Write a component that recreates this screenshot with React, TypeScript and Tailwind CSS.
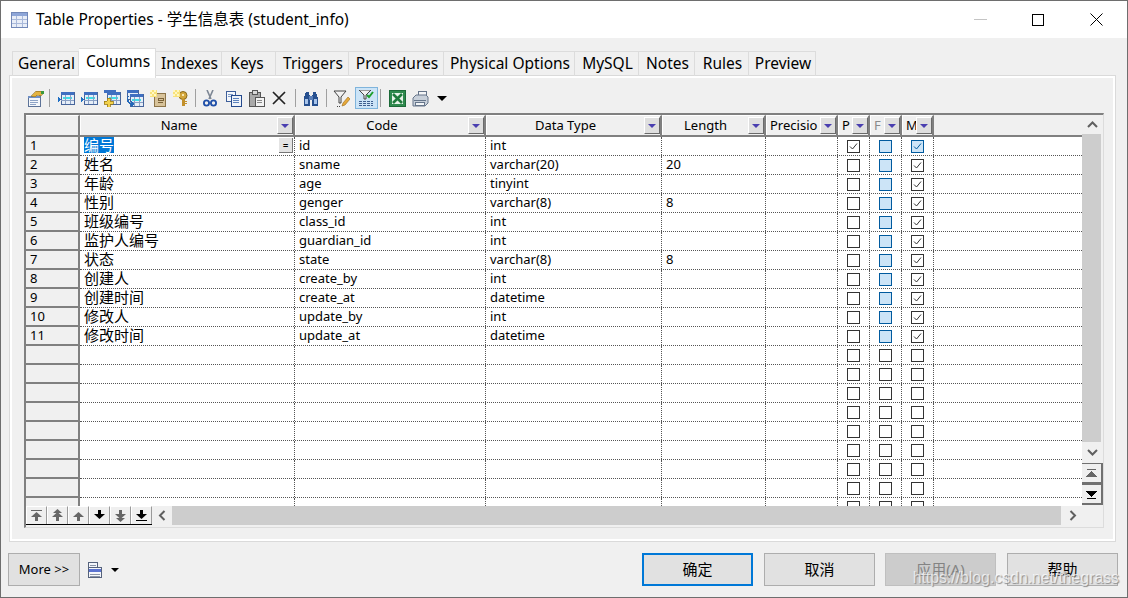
import type { ReactNode } from "react";

const FONT = "font-['Noto_Sans','Noto_Sans_CJK_SC',sans-serif]";

const tabs = [
  { label: "General", w: "w-[67px]" },
  { label: "Columns", w: "w-[77px]", active: true },
  { label: "Indexes", w: "w-[66px]" },
  { label: "Keys", w: "w-[54px] pr-[5px]" },
  { label: "Triggers", w: "w-[73px]" },
  { label: "Procedures", w: "w-[95px]" },
  { label: "Physical Options", w: "w-[131px]" },
  { label: "MySQL", w: "w-[64px]" },
  { label: "Notes", w: "w-[56px]" },
  { label: "Rules", w: "w-[54px]" },
  { label: "Preview", w: "w-[67px]" },
];

const cols = [
  { label: "Name", w: "w-[215px]" },
  { label: "Code", w: "w-[191px]" },
  { label: "Data Type", w: "w-[176px]" },
  { label: "Length", w: "w-[104px]" },
  { label: "Precisio", w: "w-[72px]", left: true },
  { label: "P", w: "w-[32px]", left: true },
  { label: "F", w: "w-[32px]", left: true, dim: true },
  { label: "M", w: "w-[32px]", left: true },
];

const rows: [string, string, string, string][] = [
  ["编号", "id", "int", ""],
  ["姓名", "sname", "varchar(20)", "20"],
  ["年龄", "age", "tinyint", ""],
  ["性别", "genger", "varchar(8)", "8"],
  ["班级编号", "class_id", "int", ""],
  ["监护人编号", "guardian_id", "int", ""],
  ["状态", "state", "varchar(8)", "8"],
  ["创建人", "create_by", "int", ""],
  ["创建时间", "create_at", "datetime", ""],
  ["修改人", "update_by", "int", ""],
  ["修改时间", "update_at", "datetime", ""],
  ["", "", "", ""],
  ["", "", "", ""],
  ["", "", "", ""],
  ["", "", "", ""],
  ["", "", "", ""],
  ["", "", "", ""],
  ["", "", "", ""],
  ["", "", "", ""],
  ["", "", "", ""],
];

function Ico({ children }: { children: ReactNode }) {
  return (
    <svg width="17" height="17" viewBox="0 0 17 17" shapeRendering="crispEdges">
      {children}
    </svg>
  );
}

// small blue table used by the column toolbar icons
function MiniTable({ x = 3, y = 3 }: { x?: number; y?: number }) {
  return (
    <g>
      <rect x={x} y={y} width="13" height="12" fill="#e6eef8" stroke="#47659b" />
      <rect x={x} y={y} width="13" height="3" fill="#3f6fc0" />
      <rect x={x + 2} y={y + 5} width="9" height="2" fill="#3fe0e8" />
      <path d={`M${x} ${y + 8}h13M${x + 4} ${y + 3}v9M${x + 9} ${y + 3}v9`} stroke="#8aa0c4" />
    </g>
  );
}

const PropsIcon = () => (
  <Ico>
    <rect x="1" y="6" width="12" height="10" fill="#f4f7fb" stroke="#5d7398" />
    <rect x="1" y="6" width="12" height="2" fill="#6f8fc4" />
    <path d="M3 10h8M3 12h8M3 14h6" stroke="#8da3c6" />
    <path d="M4 6L9 1h5l2 3-3 2-3-1-2 2z" fill="#e3b341" stroke="#8a6a1c" strokeWidth="0.6" />
    <rect x="14" y="1" width="3" height="3" fill="#3c9a3c" />
  </Ico>
);
const ColIcon = () => (
  <Ico>
    <path d="M0 7l3 2.5L0 12z" fill="#1f6fc4" />
    <MiniTable y={2} />
  </Ico>
);
const AddIcon = () => (
  <Ico>
    <rect x="0" y="0" width="12" height="3" fill="#3f6fc0" />
    <MiniTable y={2} />
    <path d="M0 11h3V8h3v3h3v3H6v3H3v-3H0z" fill="#f2d14b" stroke="#9a7a18" strokeWidth="0.8" />
  </Ico>
);
const InsertIcon = () => (
  <Ico>
    <rect x="0" y="0" width="11" height="9" fill="#e6eef8" stroke="#47659b" />
    <rect x="0" y="0" width="11" height="3" fill="#3f6fc0" />
    <MiniTable y={4} />
    <path d="M2 6C0 8 1 12 4 13v-2l4 3-4 3v-2C0 14-1 9 1 6z" fill="#2468b8" />
  </Ico>
);
const Sparkle = () => (
  <g>
    <rect x="0" y="0" width="7" height="7" fill="#f8e27a" />
    <path d="M0 0h2v2H0zM4 0h2v2H4zM2 2h2v2H2zM0 4h2v2H0zM4 4h2v2H4z" fill="#fff7c2" />
  </g>
);
const NoteIcon = () => (
  <Ico>
    <rect x="4" y="3" width="11" height="13" fill="#d8c39a" stroke="#8c7448" />
    <path d="M8 8h5v2H8zM8 12h5" fill="none" stroke="#7a6238" />
    <Sparkle />
  </Ico>
);
const KeyIcon = () => (
  <Ico>
    <circle cx="10" cy="5.5" r="4" fill="#d3a63c" stroke="#8a6a1c" shapeRendering="auto" />
    <rect x="9" y="4" width="2" height="2" fill="#f6e6b0" />
    <path d="M9 9h3v7H9zM12 11h2v1h-2zM12 13h2v1h-2z" fill="#c2902c" />
    <Sparkle />
  </Ico>
);
const ScissorsIcon = () => (
  <Ico>
    <path d="M5 0l4 9M11 0L7 9" stroke="#7c8694" strokeWidth="1.6" shapeRendering="auto" />
    <circle cx="4.5" cy="13" r="2.6" fill="none" stroke="#1f4fa8" strokeWidth="1.8" shapeRendering="auto" />
    <circle cx="11.5" cy="13" r="2.6" fill="none" stroke="#1f4fa8" strokeWidth="1.8" shapeRendering="auto" />
  </Ico>
);
const CopyIcon = () => (
  <Ico>
    <rect x="1" y="1" width="9" height="10" fill="#f4f7fb" stroke="#3e5f9a" />
    <path d="M3 4h5M3 6h5" stroke="#7f9bc8" />
    <rect x="6" y="5" width="10" height="11" fill="#eef3fa" stroke="#24498c" />
    <path d="M8 8h6M8 10h6M8 12h6" stroke="#5c82bc" />
  </Ico>
);
const PasteIcon = () => (
  <Ico>
    <rect x="1" y="2" width="11" height="14" fill="#a9a9a9" stroke="#555" />
    <rect x="4" y="0" width="5" height="4" fill="#d8d8d8" stroke="#555" />
    <rect x="7" y="7" width="9" height="9" fill="#f2f2f2" stroke="#555" />
    <path d="M9 10h5M9 12h5" stroke="#888" />
  </Ico>
);
const CrossIcon = () => (
  <Ico>
    <path d="M2 2l12 12M14 2L2 14" stroke="#222" strokeWidth="1.7" shapeRendering="auto" />
  </Ico>
);
const BinocIcon = () => (
  <Ico>
    <path d="M3 2h3v3h1v11H1V8z" fill="#27508f" />
    <path d="M13 2h-3v3H9v11h6V8z" fill="#27508f" />
    <rect x="6" y="6" width="4" height="4" fill="#5b7fb8" />
    <rect x="2" y="9" width="3" height="5" fill="#a8c4ea" />
    <rect x="11" y="9" width="3" height="5" fill="#a8c4ea" />
  </Ico>
);
const FilterEditIcon = () => (
  <Ico>
    <path d="M1 1h12L8 7v6H6V7z" fill="#f2f2f2" stroke="#444" shapeRendering="auto" />
    <path d="M10 13l5-6 2 2-5 6-3 1z" fill="#e6a93a" stroke="#9a6a18" strokeWidth="0.6" shapeRendering="auto" />
    <path d="M4 16h1M6 16h1" stroke="#444" />
  </Ico>
);
const FilterCheckIcon = () => (
  <Ico>
    <path d="M1 0h12L8 5v4H6V5z" fill="#f2f2f2" stroke="#444" shapeRendering="auto" />
    <path d="M9 5l2 2 4-5" fill="none" stroke="#1fa02c" strokeWidth="2" shapeRendering="auto" />
    <path d="M1 11h14M1 13h14M1 15h14" stroke="#3f5f8f" strokeDasharray="3 1" />
  </Ico>
);
const ExcelIcon = () => (
  <Ico>
    <rect x="0.5" y="0.5" width="16" height="16" fill="#2f8a4e" stroke="#1c6a38" />
    <rect x="3" y="3" width="11" height="11" fill="#e8f3ea" />
    <path d="M4 4l9 9M13 4l-9 9" stroke="#1f7a3c" strokeWidth="2.6" shapeRendering="auto" />
  </Ico>
);
const PrintIcon = () => (
  <Ico>
    <path d="M6 1h8v5H6z" fill="#f4f6f8" stroke="#66758a" />
    <path d="M1 8l3-3h10l2 2v6l-3 3H1z" fill="#c8d0da" stroke="#66758a" shapeRendering="auto" />
    <path d="M2 10h12" stroke="#66758a" />
    <rect x="3" y="12" width="9" height="3" fill="#f4f6f8" stroke="#66758a" />
  </Ico>
);

function Sep({ className }: { className: string }) {
  return <div className={"w-px h-[18px] bg-[#a0a0a0] shrink-0 " + className} />;
}

function ToolBtn({ children, className = "w-[23px]" }: { children: ReactNode; className?: string }) {
  return <div className={"h-[22px] flex items-center justify-center shrink-0 " + className}>{children}</div>;
}

function Toolbar() {
  return (
    <div className="h-[35px] ml-3 pt-[5px] flex items-center">
      <ToolBtn><PropsIcon /></ToolBtn>
      <Sep className="ml-[2px] mr-[5px]" />
      <ToolBtn><ColIcon /></ToolBtn>
      <ToolBtn><ColIcon /></ToolBtn>
      <ToolBtn><AddIcon /></ToolBtn>
      <ToolBtn><InsertIcon /></ToolBtn>
      <ToolBtn><NoteIcon /></ToolBtn>
      <ToolBtn><KeyIcon /></ToolBtn>
      <Sep className="ml-[2px] mr-[3px]" />
      <ToolBtn><ScissorsIcon /></ToolBtn>
      <ToolBtn><CopyIcon /></ToolBtn>
      <ToolBtn><PasteIcon /></ToolBtn>
      <ToolBtn><CrossIcon /></ToolBtn>
      <Sep className="ml-[4px] mr-[4px]" />
      <ToolBtn><BinocIcon /></ToolBtn>
      <Sep className="ml-[3px] mr-[3px]" />
      <ToolBtn><FilterEditIcon /></ToolBtn>
      <ToolBtn className="w-[25px]">
        <div className="ml-[2px] w-[23px] h-[22px] bg-[#cce4f7] border border-[#7fb4dc] flex items-center justify-center">
          <FilterCheckIcon />
        </div>
      </ToolBtn>
      <Sep className="ml-[2px] mr-[5px]" />
      <ToolBtn><ExcelIcon /></ToolBtn>
      <ToolBtn><PrintIcon /></ToolBtn>
      <div className="ml-[5px] w-0 h-0 border-x-[5px] border-x-transparent border-t-[5px] border-t-black" />
    </div>
  );
}

function HeadCell({ label, w, left, dim }: { label: string; w: string; left?: boolean; dim?: boolean }) {
  return (
    <div className={"flex shrink-0 h-full border-r-2 border-r-[#808080] border-t border-t-white border-l border-l-white pt-px " + w}>
      <div
        className={
          "flex-1 min-w-0 overflow-hidden whitespace-nowrap leading-[17px] " +
          (left ? "pl-[3px] text-left " : "text-center ") +
          (dim ? "text-[#8a8a8a]" : "text-black")
        }
      >
        {label}
      </div>
      <div className="w-[16px] h-[17px] shrink-0 bg-[#dfdfdf] border-t border-l border-t-white border-l-white border-r border-b border-r-[#6a6a6a] border-b-[#6a6a6a] flex items-center justify-center">
        <div className="w-0 h-0 border-x-[4px] border-x-transparent border-t-[4px] border-t-[#4a3fb0]" />
      </div>
    </div>
  );
}

function Check({ on, fill, blue }: { on?: boolean; fill?: boolean; blue?: boolean }) {
  return (
    <div
      className={
        "w-[13px] h-[13px] border flex items-center justify-center " +
        (fill ? "bg-[#cce4f7] border-[#005a9e]" : "bg-white border-[#333333]")
      }
    >
      {on && (
        <svg width="11" height="11" viewBox="0 0 11 11">
          <path d="M2 5.5l2.5 2.5L9 2.5" fill="none" stroke={blue ? "#005a9e" : "#333333"} strokeWidth="1" />
        </svg>
      )}
    </div>
  );
}

function TextCell({ w, children }: { w: string; children?: ReactNode }) {
  return (
    <div className={"shrink-0 h-full border-r border-dotted border-r-[#555555] pl-1 overflow-hidden whitespace-nowrap leading-[16px] " + w}>
      {children}
    </div>
  );
}

function CheckCell({ children }: { children: ReactNode }) {
  return (
    <div className="w-[32px] shrink-0 h-full border-r border-dotted border-r-[#555555] flex items-center justify-center">
      {children}
    </div>
  );
}

function Row({ n, row }: { n: number; row: [string, string, string, string] }) {
  const filled = n <= 11;
  return (
    <div className="h-[19px] shrink-0 flex">
      <div className="w-[54px] shrink-0 h-full bg-[#f0f0f0] border-b-2 border-r-2 border-[#808080] pl-[4px] leading-[16px]">
        {filled ? n : ""}
      </div>
      <div className="flex-1 min-w-0 flex bg-white border-b border-dotted border-b-[#555555]">
        <div className="w-[215px] shrink-0 h-full border-r border-dotted border-r-[#555555] pl-[4px] flex items-start whitespace-nowrap text-[15px] leading-[16px]">
          {n === 1 ? <span className="bg-[#0078d7] text-white">{row[0]}</span> : row[0]}
          {n === 1 && (
            <span className="ml-auto mr-px mt-px w-[14px] h-[15px] bg-[#e4e4e4] border-r border-b border-[#777777] text-[10px] leading-[14px] text-center">
              =
            </span>
          )}
        </div>
        <TextCell w="w-[191px]">{row[1]}</TextCell>
        <TextCell w="w-[176px]">{row[2]}</TextCell>
        <TextCell w="w-[104px]">{row[3]}</TextCell>
        <TextCell w="w-[72px]" />
        <CheckCell><Check on={n === 1} /></CheckCell>
        <CheckCell><Check fill={filled} /></CheckCell>
        <CheckCell><Check on={filled} fill={n === 1} blue={n === 1} /></CheckCell>
      </div>
    </div>
  );
}

function NavArrow({ dir, stop, dark }: { dir: "up" | "down"; stop?: "dbl" | "bar"; dark?: boolean }) {
  const c = dark ? "#000000" : "#666666";
  const up = dir === "up";
  return (
    <svg width="15" height="13" viewBox="0 0 15 13" shapeRendering="crispEdges">
      <g transform={up ? undefined : "translate(0 13) scale(1 -1)"}>
        {stop === "bar" && <rect x="2" y="1" width="11" height="1" fill={c} />}
        {stop === "dbl" && <path d="M7.5 0L12 4H3z" fill={c} shapeRendering="auto" />}
        <path d="M7.5 3L13 8H2z" fill={c} shapeRendering="auto" />
        <rect x="6" y="8" width="3" height="4" fill={c} />
      </g>
    </svg>
  );
}

function NavBtn({ children }: { children: ReactNode }) {
  return (
    <div className="w-[21px] h-[18px] shrink-0 bg-[#efefef] border-t border-l border-t-white border-l-white border-r border-r-[#9a9a9a] flex items-center justify-center">
      {children}
    </div>
  );
}

function VNavBtn({ up }: { up?: boolean }) {
  return (
    <div className="h-[21px] bg-[#efefef] border-b-2 border-r-2 border-t border-[#707070] flex items-center justify-center">
      <svg width="13" height="13" viewBox="0 0 13 13" shapeRendering="crispEdges">
        {up ? (
          <path d="M2 2h9v1H2zM6.5 4L12 10H1z" fill="#666666" />
        ) : (
          <path d="M6.5 9L12 3H1zM2 10h9v1H2z" fill="#000000" />
        )}
      </svg>
    </div>
  );
}

function Chevron({ d }: { d: string }) {
  return (
    <svg width="11" height="11" viewBox="0 0 11 11">
      <path d={d} fill="none" stroke="#606060" strokeWidth="2" />
    </svg>
  );
}

function Grid() {
  return (
    <div className="ml-3 w-[1080px] h-[415px] border-t-2 border-l-2 border-t-[#808080] border-l-[#808080] border-r border-b border-r-[#dcdcdc] border-b-[#dcdcdc] flex flex-col text-[13px] text-black">
      <div className="h-[391px] flex shrink-0">
        <div className="w-[1056px] shrink-0 flex flex-col overflow-hidden">
          <div className="h-[22px] shrink-0 flex bg-[#f0f0f0] border-b-2 border-b-[#808080]">
            <div className="w-[54px] shrink-0 h-full border-r-2 border-r-[#808080] border-t border-t-white" />
            {cols.map((c) => (
              <HeadCell key={c.label} {...c} />
            ))}
          </div>
          {rows.map((r, i) => (
            <Row key={i} n={i + 1} row={r} />
          ))}
        </div>
        <div className="w-[21px] shrink-0 flex flex-col bg-[#f0f0f0]">
          <div className="h-[19px] flex items-center justify-center pr-px">
            <Chevron d="M1 8l4.5-4.5L10 8" />
          </div>
          <div className="h-[308px] w-[19px] bg-[#cdcdcd]" />
          <div className="h-[21px] flex items-center justify-center pr-px">
            <Chevron d="M1 3l4.5 4.5L10 3" />
          </div>
          <VNavBtn up />
          <VNavBtn />
        </div>
      </div>
      <div className="h-[19px] shrink-0 flex">
        <div className="flex border-b-2 border-b-black">
          <NavBtn><NavArrow dir="up" stop="bar" /></NavBtn>
          <NavBtn><NavArrow dir="up" stop="dbl" /></NavBtn>
          <NavBtn><NavArrow dir="up" /></NavBtn>
          <NavBtn><NavArrow dir="down" dark /></NavBtn>
          <NavBtn><NavArrow dir="down" stop="dbl" /></NavBtn>
          <NavBtn><NavArrow dir="down" stop="bar" dark /></NavBtn>
        </div>
        <div className="w-[20px] flex items-center justify-center">
          <Chevron d="M7.5 1L3 5.5 7.5 10" />
        </div>
        <div className="w-[889px] bg-[#cdcdcd]" />
        <div className="w-[22px] flex items-center justify-center">
          <Chevron d="M3.5 1L8 5.5 3.5 10" />
        </div>
      </div>
    </div>
  );
}

function DialogBtn({ children, className }: { children: ReactNode; className: string }) {
  return (
    <div className={"w-[111px] h-[33px] flex items-center justify-center text-[15px] shrink-0 " + className}>
      {children}
    </div>
  );
}

export default function App() {
  return (
    <div className={"relative w-[1128px] h-[598px] bg-[#f0f0f0] border border-[#6e6e6e] overflow-hidden text-black " + FONT}>
      <div className="h-[37px] bg-white flex items-center pl-[10px]">
        <svg width="17" height="16" viewBox="0 0 17 16" shapeRendering="crispEdges">
          <rect x="0.5" y="0.5" width="16" height="15" fill="#e9eef8" stroke="#7288b8" />
          <rect x="1" y="1" width="15" height="3" fill="#8ea6d8" />
          <path d="M1 7.5h15M1 11.5h15M5.5 4v11M11.5 4v11" stroke="#a9b9da" />
        </svg>
        <span className="ml-[8px] text-[15.5px]">Table Properties - 学生信息表 (student_info)</span>
        <div className="ml-auto flex items-center">
          <div className="w-[13px] h-px bg-[#c4c4c4] mr-[45px]" />
          <div className="w-[12px] h-[12px] border border-black mr-[46px]" />
          <svg width="13" height="13" viewBox="0 0 13 13" className="mr-[24px]">
            <path d="M0.5 0.5l12 12M12.5 0.5l-12 12" stroke="#000" strokeWidth="1" />
          </svg>
        </div>
      </div>

      <div className="h-[38px] pl-[11px] flex items-end">
        {tabs.map((t) => (
          <div
            key={t.label}
            className={
              "shrink-0 pl-[2px] text-center text-[15.5px] border-r border-[#dcdcdc] " +
              t.w +
              (t.active
                ? " h-[30px] bg-white border-t border-t-[#dcdcdc] leading-[25px] relative z-10 -mb-[2px]"
                : " h-[25px] border-t border-t-[#dcdcdc] leading-[23px] first:border-l")
            }
          >
            {t.label}
          </div>
        ))}
      </div>

      <div className="ml-[9px] w-[1105px] h-[465px] border-2 border-white shadow-[0_0_0_1px_#dadada]">
        <Toolbar />
        <Grid />
      </div>

      <div className="mt-[12px] pl-[7px] pr-[9px] flex items-center">
        <div className="w-[72px] h-[33px] bg-[#e1e1e1] border border-[#adadad] flex items-center justify-center text-[13px]">
          More &gt;&gt;
        </div>
        <svg width="15" height="16" viewBox="0 0 15 16" className="ml-[8px]" shapeRendering="crispEdges">
          <rect x="0.5" y="0.5" width="9" height="7" fill="#f4f6fa" stroke="#55627c" />
          <rect x="0.5" y="5.5" width="13" height="10" fill="#f4f6fa" stroke="#55627c" />
          <rect x="1" y="7" width="12" height="3" fill="#5a72d0" />
          <path d="M2 3h6M2 12h10M2 14h10" stroke="#8a94a8" />
        </svg>
        <div className="ml-[8px] w-0 h-0 border-x-[4px] border-x-transparent border-t-[4px] border-t-black" />
        <div className="ml-auto flex">
          <DialogBtn className="bg-[#e1e1e1] border-2 border-[#0078d7]">确定</DialogBtn>
          <DialogBtn className="ml-[11px] bg-[#e1e1e1] border border-[#adadad]">取消</DialogBtn>
          <DialogBtn className="ml-[10px] bg-[#cccccc] border border-[#bfbfbf] text-[#838383]">应用(A)</DialogBtn>
          <DialogBtn className="ml-[11px] bg-[#e1e1e1] border border-[#adadad]">帮助</DialogBtn>
        </div>
      </div>

      <div className="absolute right-[8px] bottom-[9px] pointer-events-none text-[15.8px] leading-[20px] text-white/70 [text-shadow:1px_1px_1px_#8a8a8a] font-['Liberation_Sans',sans-serif]">
        https://blog.csdn.net/thegrass
      </div>
    </div>
  );
}
